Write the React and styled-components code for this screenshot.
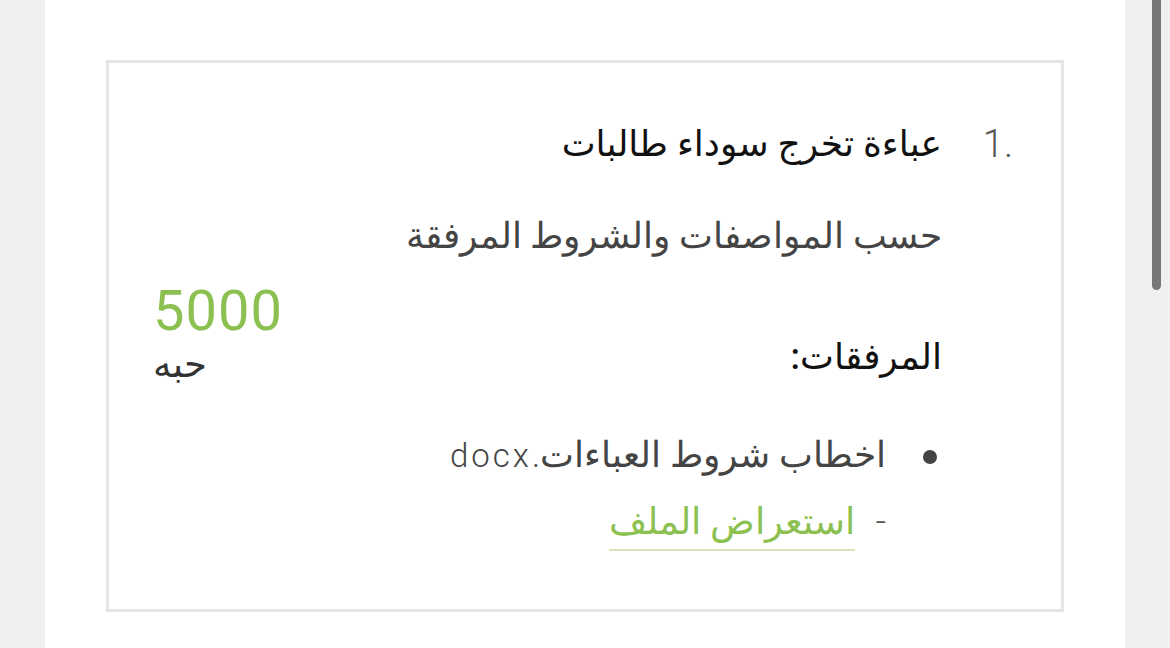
import React from 'react'
import styled, { createGlobalStyle } from 'styled-components'

const GlobalStyle = createGlobalStyle`
  body {
    margin: 0;
    background: #f0f0f0;
    font-family: Roboto, "DejaVu Sans", sans-serif;
  }
`

const Page = styled.div`
  display: flex;
  height: 648px;
  overflow: hidden;
`

const Gutter = styled.div`
  width: 45px;
  flex-shrink: 0;
`

const Panel = styled.main`
  width: 1080px;
  flex-shrink: 0;
  background: #fff;
  box-sizing: border-box;
  padding: 60px 61px;
`

const Track = styled.div`
  width: 45px;
  flex-shrink: 0;
  display: flex;
  justify-content: flex-start;
  padding-left: 27px;
  box-sizing: border-box;
`

const Thumb = styled.div`
  width: 9px;
  height: 290px;
  background: #777;
  border-radius: 0 0 5px 5px;
`

const Card = styled.section`
  direction: rtl;
  display: flex;
  align-items: center;
  justify-content: space-between;
  border: 3px solid #e5e5e5;
  box-sizing: border-box;
  height: 552px;
  padding: 40px 46px 40px 44px;
`

const Item = styled.div`
  display: flex;
  align-self: stretch;
`

const Marker = styled.div`
  width: 73px;
  flex-shrink: 0;
  font-size: 38px;
  font-weight: 300;
  color: #555;
  line-height: 50px;
  padding-top: 16px;
  direction: ltr;
  text-align: right;
  padding-right: 2px;
  box-sizing: border-box;
`

const Body = styled.div`
  display: flex;
  flex-direction: column;
  color: #444;
`

const Title = styled.h2`
  margin: 16px 0 0;
  font-size: 36px;
  font-weight: 500;
  color: #111;
  line-height: 50px;
`

const Desc = styled.p`
  margin: 42px 0 0;
  font-size: 36px;
  font-weight: 300;
  line-height: 50px;
  color: #444;
`

const Heading = styled.h3`
  margin: 71px 0 0;
  font-size: 36px;
  font-weight: 500;
  line-height: 50px;
  color: #111;
`

const Files = styled.ul`
  list-style: none;
  margin: 48px 0 0;
  padding: 0;
`

const FileRow = styled.li`
  display: flex;
  align-items: flex-start;
  gap: 37px;
`

const Dot = styled.span`
  width: 14px;
  height: 14px;
  border-radius: 50%;
  background: #444;
  margin-top: 20px;
  margin-right: 5px;
  flex-shrink: 0;
`

const FileBody = styled.div`
  display: flex;
  flex-direction: column;
`

const FileName = styled.span`
  font-size: 36px;
  font-weight: 300;
  line-height: 50px;
  color: #444;
`

const Ext = styled.span`
  font-size: 33px;
  letter-spacing: 3px;
`

const LinkRow = styled.div`
  margin-top: 16px;
  font-size: 37px;
  font-weight: 300;
  line-height: 50px;
  color: #555;
  display: flex;
  gap: 20px;
`

const ViewLink = styled.a`
  color: #8cc152;
  text-decoration: none;
  border-bottom: 2px solid #d5e5b8;
  padding-bottom: 2px;
`

const Qty = styled.div`
  display: flex;
  flex-direction: column;
  align-items: flex-end;
  direction: ltr;
  align-self: center;
  margin-top: 0;
`

const Amount = styled.div`
  font-size: 56px;
  font-weight: 400;
  color: #8cc152;
  line-height: 58px;
  letter-spacing: 1px;
`

const Unit = styled.div`
  font-size: 37px;
  color: #333;
  line-height: 50px;
  align-self: flex-start;
`

export default function App () {
  return (
    <Page>
      <GlobalStyle />
      <Gutter />
      <Panel>
        <Card>
          <Item>
            <Marker>1.</Marker>
            <Body>
              <Title>عباءة تخرج سوداء طالبات</Title>
              <Desc>حسب المواصفات والشروط المرفقة</Desc>
              <Heading>المرفقات:</Heading>
              <Files>
                <FileRow>
                  <Dot />
                  <FileBody>
                    <FileName>اخطاب شروط العباءات.<Ext>docx</Ext></FileName>
                    <LinkRow>
                      <span>-</span>
                      <ViewLink href='#'>استعراض الملف</ViewLink>
                    </LinkRow>
                  </FileBody>
                </FileRow>
              </Files>
            </Body>
          </Item>
          <Qty>
            <Amount>5000</Amount>
            <Unit>حبه</Unit>
          </Qty>
        </Card>
      </Panel>
      <Track>
        <Thumb />
      </Track>
    </Page>
  )
}
